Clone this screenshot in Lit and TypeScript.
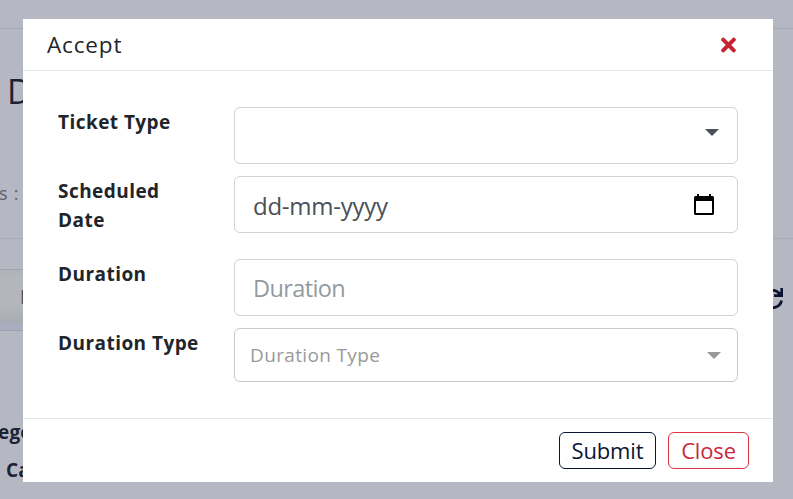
import { LitElement, html, css } from "lit";
import { customElement } from "lit/decorators.js";

@customElement("page-behind")
class PageBehind extends LitElement {
  static styles = css`
    :host { display: flex; flex-direction: column; height: 100%; background: #b5b8c2; color: #1b2233; white-space: nowrap; overflow: hidden; }
    .topbar { height: 28px; border-bottom: 1px solid #a3a7b8; }
    .head { height: 209px; border-bottom: 1px solid #a8abb5; display: flex; flex-direction: column; }
    .title { margin: 38px 0 0 7px; font-size: 34px; line-height: 48px; font-weight: 500; }
    .status { margin-top: 65px; font-size: 18px; line-height: 26px; letter-spacing: .8px; color: #5d626d; margin-left: -1px; }
    .tools { height: 92px; display: flex; justify-content: space-between; padding-top: 30px; box-sizing: border-box; }
    .side { width: 120px; }
    .tab { box-sizing: border-box; height: 54px; border-top: 1px solid #a0a2aa; padding-left: 20px; font-size: 19px; line-height: 54px; font-weight: 600; color: #4b5160; background: linear-gradient(#b1b3bb, #b5b7bf 20%, #b3b5bd 70%, #a9abb2); }
    .band { height: 7px; background: #a8aec0; border-bottom: 1px solid #9da0ad; }
    .refresh { width: 22px; height: 22px; margin: 19px 9px 0 0; }
    .row { font-weight: 700; font-size: 19px; line-height: 28px; letter-spacing: .2px; }
    .one { margin: 87px 0 0 -2px; }
    .two { margin: 10px 0 0 6px; }
  `;
  render() {
    return html`
      <div class="topbar"></div>
      <div class="head"><div class="title">D</div><div class="status">s :</div></div>
      <div class="tools">
        <div class="side"><div class="tab">I</div><div class="band"></div></div>
        <svg class="refresh" viewBox="0 0 22 22" fill="none" stroke="#0b1533" stroke-width="2.8">
          <path d="M2 8.5A9 9 0 0 1 18 6.5M19.6 12.5A9 9 0 0 1 4 16.5"/>
          <path d="M21 0V9H12V6.2H15.5L18.4 3.5V0ZM1 22V13H10V15.8H6.5L3.6 18.5V22Z" fill="#0b1533" stroke="none"/>
        </svg>
      </div>
      <div class="row one">ego</div>
      <div class="row two">Cat</div>`;
  }
}

@customElement("accept-dialog")
class AcceptDialog extends LitElement {
  static styles = css`
    :host { display: flex; flex-direction: column; background: #fff; color: #212529; }
    * { box-sizing: border-box; }
    header { height: 52px; border-bottom: 1px solid #e6e7e9; display: flex; align-items: center; justify-content: space-between; padding: 0 36px 0 24px; font-size: 22.5px; font-weight: 500; letter-spacing: .85px; }
    .x { width: 17px; height: 17px; }
    main { flex: 1; padding: 36px 35px 0; display: grid; grid-template-columns: 176px 1fr; grid-template-rows: 57px 57px 57px 54px; align-content: start; row-gap: 12px; }
    .late, .last { margin-top: 14px; margin-bottom: -14px; }
    label { font-weight: 700; font-size: 19px; line-height: 29px; letter-spacing: .45px; width: 150px; padding-top: 1px; }
    .field { border: 1px solid #ced2db; border-radius: 6px; display: flex; justify-content: space-between; padding: 0 23px 0 18px; align-items: center; font-size: 24px; color: #495057; }
    .field.last { border-color: #c9c9cb; padding: 0 16px 0 15px; font-size: 19px; letter-spacing: .35px; color: #999; }
    .field.select { padding-right: 18px; }
    .arrow { width: 14px; height: 7px; fill: #495057; }
    .select .arrow { margin-top: -7px; }
    .last .arrow { fill: #999; }
    .field.date { padding-top: 2px; letter-spacing: -.25px; }
    .hint { color: #939a9f; font-size: 23.5px; letter-spacing: -.6px; padding-top: 1px; }
    .cal { width: 20px; height: 22px; margin-top: -1px; }
    footer { height: 64px; border-top: 1px solid #e6e7e9; display: flex; justify-content: flex-end; align-items: center; gap: 12px; padding: 0 24px; }
    button { font: 22px "Open Sans", "Noto Sans", sans-serif; letter-spacing: -.15px; height: 37px; border-radius: 6px; background: #fff; padding: 0; line-height: 35px; }
    .submit { width: 97px; border: 1px solid #0b1533; color: #0b1533; }
    .close { width: 81px; border: 1px solid #dc3545; color: #c9283a; }
  `;
  arrow() {
    return html`<svg class="arrow" viewBox="0 0 14 7"><path d="M0 0H14L7 7Z"/></svg>`;
  }
  render() {
    return html`
      <header><span>Accept</span>
        <svg class="x" viewBox="0 0 17 17" stroke="#c82333" stroke-width="4" stroke-linecap="round"><path d="M3.2 3.7L13.8 14.3M13.8 3.7L3.2 14.3"/></svg>
      </header>
      <main>
        <label>Ticket Type</label>
        <div class="field select"><span></span>${this.arrow()}</div>
        <label>Scheduled Date</label>
        <div class="field date"><span>dd-mm-yyyy</span>
          <svg class="cal" viewBox="0 0 20 22"><path fill="#000" fill-rule="evenodd" d="M3 0H5V2H15V0H17V2H18.5Q20 2 20 3.5V19.5Q20 21 18.5 21H1.5Q0 21 0 19.5V3.5Q0 2 1.5 2H3ZM2 7V19H18V7Z"/></svg>
        </div>
        <label class="late">Duration</label>
        <div class="field late"><span class="hint">Duration</span></div>
        <label class="last">Duration Type</label>
        <div class="field last"><span>Duration Type</span>${this.arrow()}</div>
      </main>
      <footer><button class="submit">Submit</button><button class="close">Close</button></footer>`;
  }
}

@customElement("app-root")
class AppRoot extends LitElement {
  static styles = css`
    :host { display: block; position: relative; height: 499px; overflow: hidden; font-family: "Open Sans", "Noto Sans", sans-serif; }
    accept-dialog { position: absolute; left: 23px; top: 19px; width: 750px; height: 463px; }
  `;
  render() {
    return html`<page-behind></page-behind><accept-dialog></accept-dialog>`;
  }
}
